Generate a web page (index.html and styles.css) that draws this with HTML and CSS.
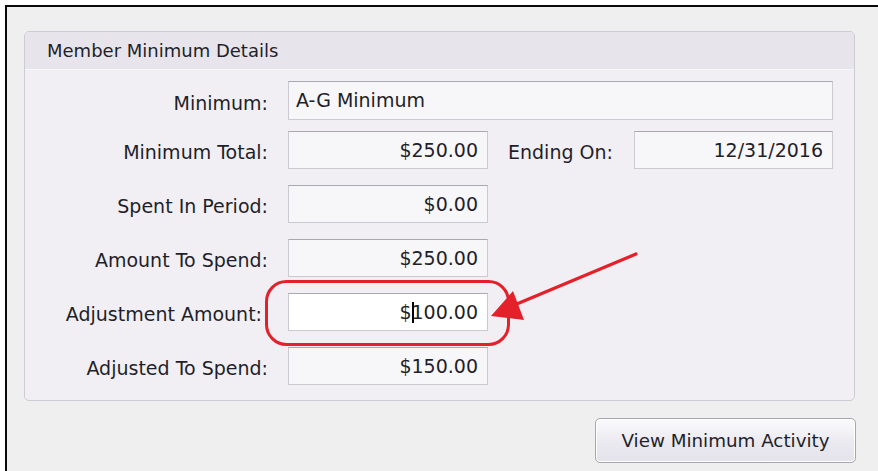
FILE: index.html
```html
<!DOCTYPE html>
<html lang="en">
<head>
<meta charset="utf-8">
<title>Member Minimum Details</title>
<link rel="stylesheet" href="styles.css">
</head>
<body>
<div class="frame">
  <section class="group">
    <header class="group-title">Member Minimum Details</header>
    <div class="group-body">
      <div class="row-wide">
        <span class="label">Minimum:</span>
        <div class="field">A-G Minimum</div>
      </div>
      <div class="form-grid">
        <span class="label">Minimum Total:</span>
        <div class="field num">$250.00</div>
        <span class="label side">Ending On:</span>
        <div class="field num">12/31/2016</div>

        <span class="label">Spent In Period:</span>
        <div class="field num">$0.00</div>
        <span></span><span></span>

        <span class="label">Amount To Spend:</span>
        <div class="field num">$250.00</div>
        <span></span><span></span>

        <span class="label shift">Adjustment Amount:</span>
        <div class="field num active">$<span class="caret"></span>100.00</div>
        <span></span><span></span>

        <span class="label">Adjusted To Spend:</span>
        <div class="field num">$150.00</div>
        <span></span><span></span>
      </div>
    </div>
  </section>
  <div class="actions">
    <button class="btn" type="button">View Minimum Activity</button>
  </div>
</div>

<svg class="callout" width="878" height="471" viewBox="0 0 878 471" aria-hidden="true">
  <rect x="266.5" y="281.5" width="242" height="63" rx="20" ry="20" fill="none" stroke="#e4202a" stroke-width="3"/>
  <line x1="636" y1="254" x2="512" y2="306" stroke="#e4202a" stroke-width="3.2" stroke-linecap="round"/>
  <polygon points="491,316 513,291 524,320" fill="#e4202a"/>
</svg>
</body>
</html>
```

FILE: styles.css
```css
html, body {
  margin: 0;
  padding: 0;
  background: #ffffff;
}

body {
  font-family: "DejaVu Sans", Verdana, sans-serif;
  font-size: 18px;
  color: #1f1f29;
}

.frame {
  box-sizing: border-box;
  margin: 5px 0 0 5px;
  height: calc(100vh - 5px);
  border-top: 2px solid #0a0a0a;
  border-left: 2px solid #0a0a0a;
  background: #efefef;
  padding: 24px 23px 0 17px;
}

/* group box */
.group {
  border: 1px solid #cdcbd4;
  border-radius: 5px;
  background: #f1eff4;
  overflow: hidden;
}

.group-title {
  height: 37px;
  line-height: 37px;
  padding-left: 22px;
  background: #e7e5eb;
  border-bottom: 1px solid #f7f6f9;
}

.group-body {
  padding: 11px 21px 15px 0;
  font-size: 19px;
}

.label {
  text-align: right;
  white-space: nowrap;
  align-self: center;
  padding-top: 4px;
}

.label.side {
  text-align: left;
}

.label.shift {
  margin-right: 6px;
}

.field {
  box-sizing: border-box;
  height: 38px;
  line-height: 36px;
  padding: 0 9px 0 7px;
  background: #f7f6f9;
  border: 1px solid #cbc9d1;
  border-top-color: #a9a8b0;
  white-space: nowrap;
}

.field.num {
  text-align: right;
}

.field.active {
  background: #ffffff;
}

.caret {
  display: inline-block;
  width: 2px;
  height: 21px;
  background: #000;
  vertical-align: -4px;
  margin-right: -2px;
}

.row-wide {
  display: grid;
  grid-template-columns: 243px 1fr;
  column-gap: 20px;
  margin-bottom: 11px;
}

.row-wide .field {
  height: 39px;
  line-height: 37px;
}

.form-grid {
  display: grid;
  grid-template-columns: 243px 200px 106px 199px;
  grid-auto-rows: 38px;
  column-gap: 20px;
  row-gap: 16px;
}

/* buttons */
.actions {
  display: flex;
  justify-content: flex-end;
  margin-top: 17px;
  margin-right: -1px;
}

.btn {
  box-sizing: border-box;
  width: 261px;
  height: 45px;
  font: inherit;
  font-size: 18.3px;
  color: #1f1f29;
  border: 1px solid #a7a6ae;
  border-radius: 5px;
  background: linear-gradient(#fbfbfd, #ebe9f0 55%, #e4e2ea);
  box-shadow: inset 0 0 0 1px #ffffff;
  padding: 0;
}

/* annotation overlay */
.callout {
  position: absolute;
  left: 0;
  top: 0;
  pointer-events: none;
}
```
